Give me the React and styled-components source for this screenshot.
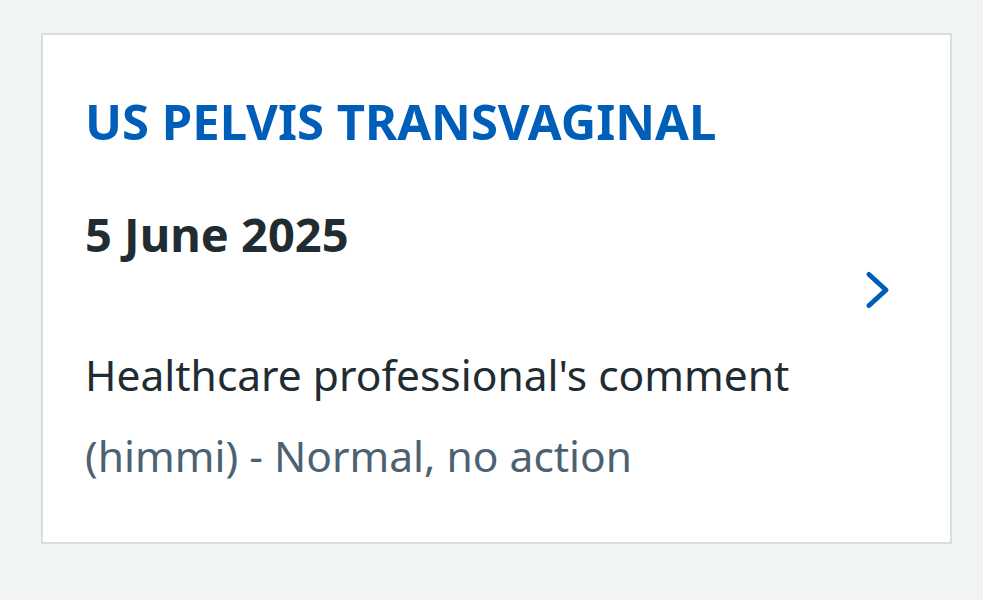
import React from "react"
import styled, { createGlobalStyle } from "styled-components"

const GlobalStyle = createGlobalStyle`
  html, body {
    margin: 0;
    padding: 0;
    background-color: #f0f4f5;
    font-family: "Noto Sans", "Open Sans", Arial, sans-serif;
  }
`

const Page = styled.main`
  min-height: 100vh;
  box-sizing: border-box;
  padding: 33px 31px 56px 41px;
`

const Card = styled.section`
  box-sizing: border-box;
  height: 511px;
  background-color: #ffffff;
  border: 2px solid #d8dde0;
  display: flex;
  align-items: flex-start;
  padding: 58px 58px 0 42px;
`

const Content = styled.div`
  flex: 1;
  display: flex;
  flex-direction: column;
`

const Title = styled.h2`
  margin: 0;
  font-size: 49px;
  line-height: 56px;
  font-weight: 700;
  color: #005eb8;
`

const DateText = styled.p`
  margin: 58px 0 0;
  font-size: 47px;
  line-height: 55px;
  font-weight: 700;
  color: #212b32;
`

const Text = styled.p`
  margin: ${({ gap }) => gap}px 0 0;
  font-size: 42.5px;
  line-height: 52px;
  color: ${({ muted }) => (muted ? "#4c6272" : "#212b32")};
`

const Chevron = styled.svg`
  align-self: center;
  margin-top: -55px;
  width: 28px;
  height: 40px;
  flex-shrink: 0;
`

export default function App() {
  return (
    <>
      <GlobalStyle />
      <Page>
        <Card>
          <Content>
            <Title>US PELVIS TRANSVAGINAL</Title>
            <DateText>5 June 2025</DateText>
            <Text gap={87}>Healthcare professional's comment</Text>
            <Text gap={29} muted>
              (himmi) - Normal, no action
            </Text>
          </Content>
          <Chevron viewBox="0 0 28 40" aria-hidden="true">
            <path
              d="M5 4.5 L22 20 L5 35.5"
              fill="none"
              stroke="#005eb8"
              strokeWidth="5"
              strokeLinecap="round"
              strokeLinejoin="round"
            />
          </Chevron>
        </Card>
      </Page>
    </>
  )
}
